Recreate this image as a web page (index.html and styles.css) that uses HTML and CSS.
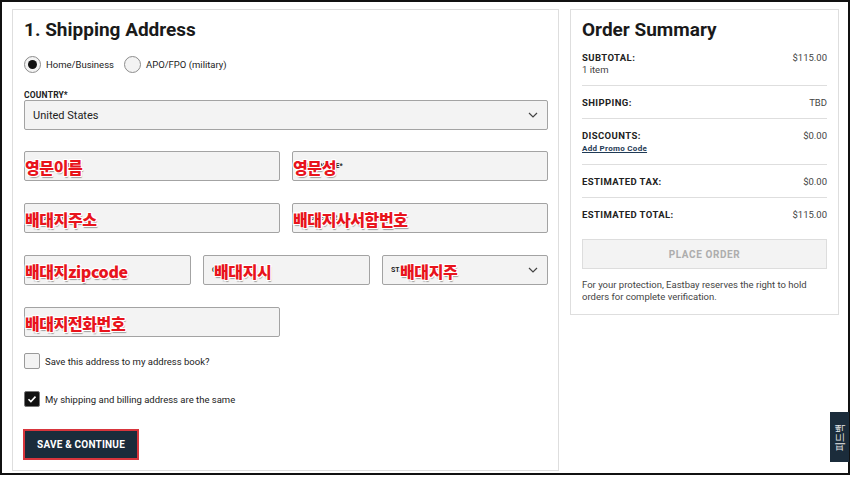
FILE: index.html
```html
<!DOCTYPE html>
<html lang="en">
<head>
<meta charset="utf-8">
<title>Checkout</title>
<link rel="stylesheet" href="styles.css">
</head>
<body>
<div class="frame">
  <section class="panel shipping">
    <h1 class="title">1. Shipping Address</h1>
    <div class="radios">
      <label class="radio"><span class="dot on"></span>Home/Business</label>
      <label class="radio"><span class="dot"></span>APO/FPO (military)</label>
    </div>
    <div class="label">COUNTRY*</div>
    <div class="select"><span>United States</span><svg class="chev" width="10" height="6" viewBox="0 0 10 6"><path d="M1 1l4 4 4-4" fill="none" stroke="#444" stroke-width="1.2"/></svg></div>

    <div class="fields">
      <div class="row two">
        <div class="field"><span class="flabel">FIRST NAME*</span><span class="note">영문이름</span></div>
        <div class="field"><span class="flabel">LAST NAME*</span><span class="note">영문성</span></div>
      </div>
      <div class="row two">
        <div class="field"><span class="flabel">ADDRESS 1*</span><span class="note">배대지주소</span></div>
        <div class="field"><span class="flabel">ADDRESS 2</span><span class="note">배대지사서함번호</span></div>
      </div>
      <div class="row three">
        <div class="field"><span class="flabel">ZIP CODE*</span><span class="note">배대지zipcode</span></div>
        <div class="field"><span class="flabel">CITY*</span><span class="note n-city">배대지시</span></div>
        <div class="field"><span class="flabel">STATE*</span><span class="note n-state">배대지주</span><svg class="chev" width="10" height="6" viewBox="0 0 10 6"><path d="M1 1l4 4 4-4" fill="none" stroke="#444" stroke-width="1.2"/></svg></div>
      </div>
      <div class="row two">
        <div class="field"><span class="flabel">PHONE NUMBER*</span><span class="note">배대지전화번호</span></div>
      </div>
    </div>

    <label class="check first"><span class="box"></span>Save this address to my address book?</label>
    <label class="check"><span class="box on"><svg width="12" height="12" viewBox="0 0 12 12"><path d="M2.5 6.2l2.4 2.4 4.6-5" fill="none" stroke="#fff" stroke-width="1.6"/></svg></span>My shipping and billing address are the same</label>

    <button class="save">SAVE &amp; CONTINUE</button>
  </section>

  <aside class="panel summary">
    <h2 class="title">Order Summary</h2>
    <div class="srow">
      <div class="line"><span class="k">SUBTOTAL:</span><span class="v">$115.00</span></div>
      <div class="sub">1 item</div>
    </div>
    <div class="srow">
      <div class="line"><span class="k">SHIPPING:</span><span class="v">TBD</span></div>
    </div>
    <div class="srow">
      <div class="line"><span class="k">DISCOUNTS:</span><span class="v">$0.00</span></div>
      <a class="promo">Add Promo Code</a>
    </div>
    <div class="srow">
      <div class="line"><span class="k">ESTIMATED TAX:</span><span class="v">$0.00</span></div>
    </div>
    <div class="srow last">
      <div class="line"><span class="k">ESTIMATED TOTAL:</span><span class="v">$115.00</span></div>
    </div>
    <button class="place">PLACE ORDER</button>
    <p class="protect">For your protection, Eastbay reserves the right to hold orders for complete verification.</p>
  </aside>
</div>
<div class="feedback"><span>피드백</span></div>
</body>
</html>
```
FILE: styles.css
```css
html, body {
  margin: 0;
  padding: 0;
  background: #fff;
}
body {
  font-family: Roboto, "Noto Sans", Arial, sans-serif;
  color: #222;
  width: 850px;
  height: 477px;
  position: relative;
  overflow: hidden;
}
.frame {
  width: 850px;
  height: 475px;
  box-sizing: border-box;
  border: 2px solid #111;
  display: flex;
  align-items: flex-start;
  gap: 11px;
  padding: 7px 0 0 10px;
}
.panel {
  box-sizing: border-box;
  border: 1px solid #dedede;
  background: #fff;
}
.shipping {
  width: 547px;
  height: 462px;
  padding: 8px 10px 0 11px;
}
.summary {
  width: 269px;
  padding: 8px 11px 11px 11px;
}
.title {
  margin: 0;
  font-size: 19px;
  line-height: 24px;
  font-weight: 700;
  color: #1a1a1a;
}
.radios {
  display: flex;
  gap: 10px;
  margin-top: 14px;
  height: 17px;
  align-items: center;
}
.radio {
  display: flex;
  align-items: center;
  gap: 5px;
  font-size: 9.5px;
  color: #222;
}
.dot {
  width: 15px;
  height: 15px;
  border: 1px solid #8d8d8d;
  border-radius: 50%;
  background: #f3f3f3;
  display: flex;
  align-items: center;
  justify-content: center;
}
.dot.on::after {
  content: "";
  width: 9px;
  height: 9px;
  border-radius: 50%;
  background: #111;
}
.label {
  margin-top: 17px;
  font-size: 8.5px;
  line-height: 10px;
  font-weight: 700;
  color: #222;
  letter-spacing: 0.2px;
}
.select, .field {
  box-sizing: border-box;
  height: 30px;
  border: 1px solid #a3a3a3;
  border-radius: 2px;
  background: #f3f3f3;
  display: flex;
  align-items: center;
  position: relative;
}
.select {
  padding: 0 9px 0 8px;
  justify-content: space-between;
  font-size: 11px;
  color: #222;
}
.chev {
  display: block;
}
.fields {
  margin-top: 21px;
  display: flex;
  flex-direction: column;
  gap: 22px;
}
.row {
  display: grid;
  gap: 12px;
}
.row.two {
  grid-template-columns: 256px 256px;
}
.row.three {
  grid-template-columns: 167px 167px 1fr;
}
.field {
  padding: 0 9px 0 8px;
  justify-content: space-between;
}
.flabel {
  font-size: 7px;
  font-weight: 700;
  color: #222;
}
.note {
  position: absolute;
  left: 0;
  top: 5px;
  font-family: "Noto Sans CJK KR", "Noto Sans", sans-serif;
  font-weight: 900;
  font-size: 16px;
  line-height: 21px;
  letter-spacing: -0.4px;
  color: #e8141c;
  text-shadow: 1px 0 0 #fff, -1px 0 0 #fff, 0 1px 0 #fff, 0 -1px 0 #fff,
    1px 1px 0 #fff, -1px -1px 0 #fff, 1px -1px 0 #fff, -1px 1px 0 #fff,
    1px 2px 1px rgba(0,0,0,0.35);
}
.note.n-city {
  left: 10px;
}
.note.n-state {
  left: 17px;
}
.check {
  display: flex;
  align-items: center;
  gap: 5px;
  font-size: 9.5px;
  color: #222;
  margin-top: 22px;
  height: 16px;
}
.check.first {
  margin-top: 16px;
}
.box {
  box-sizing: border-box;
  width: 16px;
  height: 16px;
  border: 1px solid #9a9a9a;
  border-radius: 2px;
  background: #f3f3f3;
  display: flex;
  align-items: center;
  justify-content: center;
}
.box.on {
  background: #111;
  border-color: #777;
}
.save {
  display: block;
  margin-top: 22px;
  margin-left: -1px;
  width: 116px;
  height: 31px;
  box-sizing: border-box;
  border: 2px solid #d8353c;
  background: #1b2c3b;
  color: #fff;
  font-family: Roboto, Arial, sans-serif;
  font-size: 10px;
  font-weight: 700;
  letter-spacing: 0.2px;
  padding: 0;
}
.srow {
  border-bottom: 1px solid #dedede;
  padding: 11px 0 9px;
}
.summary .title {
  margin-bottom: -1px;
}
.srow.last {
  border-bottom: none;
}
.line {
  display: flex;
  justify-content: space-between;
  font-size: 9.5px;
  line-height: 12px;
}
.k {
  font-weight: 700;
  letter-spacing: 0.4px;
  color: #222;
}
.v {
  color: #444;
}
.sub {
  font-size: 9.5px;
  line-height: 12px;
  color: #444;
}
.promo {
  display: block;
  margin-top: 1px;
  font-size: 8px;
  line-height: 12px;
  font-weight: 700;
  color: #1f3a55;
  text-decoration: underline;
  letter-spacing: 0.3px;
}
.place {
  display: block;
  width: 100%;
  height: 30px;
  margin-top: 9px;
  box-sizing: border-box;
  border: 1px solid #dddddd;
  background: #f3f3f3;
  color: #adadad;
  font-family: Roboto, Arial, sans-serif;
  font-size: 10px;
  font-weight: 700;
  letter-spacing: 0.6px;
}
.protect {
  margin: 10px 0 0;
  font-size: 9.5px;
  line-height: 12px;
  color: #444;
}
.feedback {
  position: absolute;
  left: 830px;
  top: 412px;
  width: 19px;
  height: 50px;
  background: #1b2c3b;
  display: flex;
  align-items: center;
  justify-content: center;
}
.feedback span {
  display: block;
  transform: rotate(-90deg);
  white-space: nowrap;
  font-family: "Noto Sans CJK KR", sans-serif;
  font-size: 10px;
  color: #e8e8e8;
}
```
